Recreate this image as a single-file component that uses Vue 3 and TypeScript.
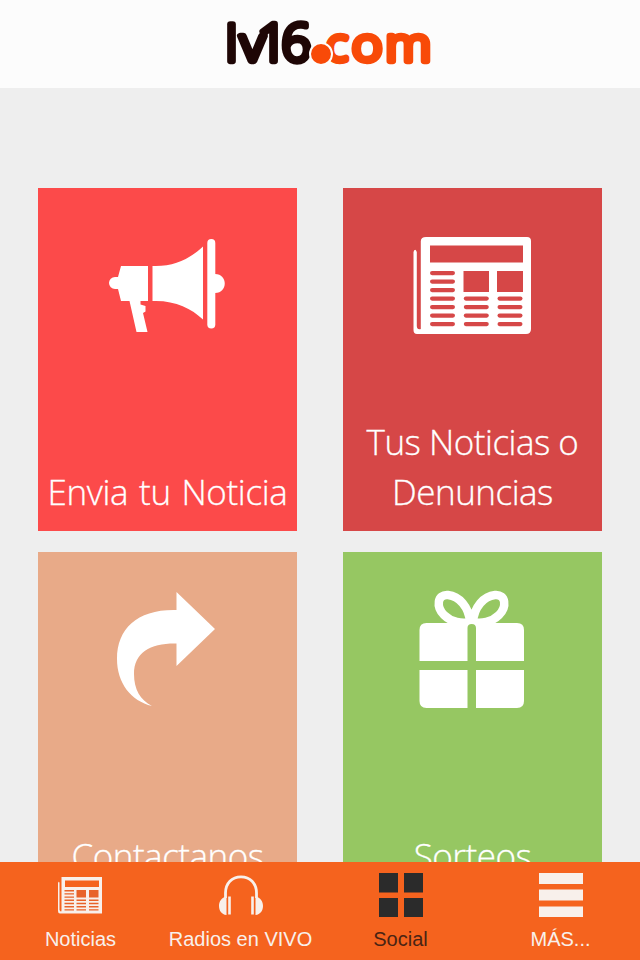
<script setup lang="ts">
interface Tile {
  icon: 'megaphone' | 'news' | 'share' | 'gift'
  lines: string[]
  tone: string
}

interface Tab {
  icon: 'news' | 'headphones' | 'grid' | 'menu'
  label: string
  active?: boolean
}

const tiles: Tile[] = [
  { icon: 'megaphone', lines: ['Envia tu Noticia'], tone: 'red' },
  { icon: 'news', lines: ['Tus Noticias o', 'Denuncias'], tone: 'brick' },
  { icon: 'share', lines: ['Contactanos'], tone: 'peach' },
  { icon: 'gift', lines: ['Sorteos'], tone: 'green' },
]

const tabs: Tab[] = [
  { icon: 'news', label: 'Noticias' },
  { icon: 'headphones', label: 'Radios en VIVO' },
  { icon: 'grid', label: 'Social', active: true },
  { icon: 'menu', label: 'MÁS...' },
]

const shortRows = [51.5, 60, 68.5, 77, 85.5, 94, 102.5]
</script>

<template>
  <div class="screen">
    <header class="header">
      <svg class="logo" viewBox="0 0 240 88" role="img" aria-label="lv16.com">
        <g class="wordmark dark">
          <text x="16" y="61" class="ascender">l</text>
          <text transform="translate(30.500 61) scale(1.130 1)">v</text>
          <text x="47.500" y="61" class="digit">1</text>
          <text x="71.500" y="61" class="digit">6</text>
        </g>
        <g class="wordmark orange">
          <text x="116" y="61">c</text>
          <text transform="translate(142 61) scale(1.120 1)">o</text>
          <text transform="translate(175.500 61) scale(1.120 1)">m</text>
        </g>
        <circle cx="111" cy="54" r="11" class="dot" />
      </svg>
    </header>

    <main class="tiles">
      <section v-for="tile in tiles" :key="tile.icon" class="tile" :class="tile.tone">
        <svg v-if="tile.icon === 'megaphone'" class="tile-icon" viewBox="0 0 160 140">
          <path d="M31 46H58V81H50.500V84.500L55.500 86V91.500L53 93L57.500 112H46.500L39.500 81H31L28 69H25A6 6 0 0 1 25 57H28Z" />
          <path d="M62.500 46C84 47 101 38 113 26.500V99.500C101 88 84 80 62.500 81Z" />
          <rect x="117.300" y="19" width="8" height="89.500" rx="4" />
          <path d="M125 54C138 54 138 73 125 73Z" />
        </svg>
        <svg v-else-if="tile.icon === 'news'" class="tile-icon" viewBox="0 0 160 140">
          <path d="M18.500 32Q20 27.500 21.800 32V106Q22 110 25.800 109V21Q26 17 31 17H132Q136 17 136 21V109Q136 114 131 114H22Q18.500 114 18.500 110Z" />
          <g class="cut">
            <rect x="35" y="25.500" width="93" height="17" />
            <rect x="68.500" y="51" width="25.500" height="21" />
            <rect x="102" y="51" width="26" height="21" />
            <rect v-for="y in shortRows" :key="y" x="35" :y="y - 0.500" width="25" height="4.200" rx="2.100" />
            <rect v-for="y in shortRows.slice(3)" :key="`b${y}`" x="68.800" :y="y - 0.500" width="25" height="4.200" rx="2.100" />
            <rect v-for="y in shortRows.slice(3)" :key="`c${y}`" x="102.500" :y="y - 0.500" width="25" height="4.200" rx="2.100" />
          </g>
        </svg>
        <svg v-else-if="tile.icon === 'share'" class="tile-icon" viewBox="0 0 160 140">
          <path d="M86.500 12L125 49L86.500 86V63.500C61 63 44 72 44 94C44 109 50 120 62 126C41 121 27 103 27 79C27 48 48 29 86.500 30Z" />
        </svg>
        <svg v-else class="tile-icon" viewBox="0 0 160 140">
          <path d="M24.500 81V50Q24.500 43 31.500 43H122Q129 43 129 50V81ZM24.500 90H129V121Q129 128 122 128H31.500Q24.500 128 24.500 121Z" />
          <path class="bow" d="M75 42C74 27 64 16 53 15C42 14 41 27 49 35C56 42 67 44 75 42ZM78 42C79 27 89 16 100 15C111 14 112 27 104 35C97 42 86 44 78 42Z" />
          <path class="ribbon" d="M72.500 129V48Q72.500 44 76.700 44T81 48V129Z" />
        </svg>
        <h2 class="caption">
          <span v-for="line in tile.lines" :key="line" class="line">{{ line }}</span>
        </h2>
      </section>
    </main>

    <nav class="tabbar">
      <a v-for="tab in tabs" :key="tab.icon" class="tab" :class="{ active: tab.active }">
        <svg v-if="tab.icon === 'news'" class="tab-icon news" viewBox="0 0 44 44">
          <path fill-rule="evenodd" d="M3.500 4H44V40.500H2Q0 40.500 0 38V10Q1 7.500 1.500 10V37Q3.500 40 3.500 37ZM7 7.500V14H41V7.500Z" />
          <g class="tab-cut">
            <rect x="18.500" y="17" width="9.500" height="7.500" />
            <rect x="31" y="17" width="9.500" height="7.500" />
            <path d="M6.500 17.700H16M6.500 20.900H16M6.500 24.100H16M6.500 27.300H16M6.500 30.500H16M6.500 33.700H16M6.500 36.900H16M18.500 27.300H28M18.500 30.500H28M18.500 33.700H28M18.500 36.900H28M31 27.300H40.500M31 30.500H40.500M31 33.700H40.500M31 36.900H40.500" />
          </g>
        </svg>
        <svg v-else-if="tab.icon === 'headphones'" class="tab-icon" viewBox="0 0 44 44">
          <path class="band" d="M6.500 25V20C6.500 10 13 3.800 22 3.800S37.500 10 37.500 20V25" />
          <path d="M7.500 23.500V42C-2.500 41 -2.500 25 7.500 23.500ZM36.500 23.500V42C46.500 41 46.500 25 36.500 23.500Z" />
          <path d="M9.200 23.500H11.800V41.500H9.200ZM32.200 23.500H34.800V41.500H32.200Z" />
        </svg>
        <svg v-else-if="tab.icon === 'grid'" class="tab-icon" viewBox="0 0 44 44">
          <path d="M0 0H19V19.500H0ZM25 0H44V19.500H25ZM0 25H19V44H0ZM25 25H44V44H25Z" />
        </svg>
        <svg v-else class="tab-icon" viewBox="0 0 44 44">
          <path d="M0 0H44V11H0ZM0 16.500H44V27.500H0ZM0 33.500H44V44H0Z" />
        </svg>
        <span class="tab-label">{{ tab.label }}</span>
      </a>
    </nav>
  </div>
</template>

<style>
body {
  margin: 0;
  overflow: hidden;
}
</style>

<style scoped>
.screen {
  display: flex;
  flex-direction: column;
  width: 640px;
  height: 960px;
  overflow: hidden;
  background: #eeeeee;
}

.header {
  flex: 0 0 88px;
  display: flex;
  justify-content: center;
  background: #fcfcfc;
}

.logo {
  width: 240px;
  height: 88px;
  margin-left: 20px;
}

.wordmark {
  font-family: 'Open Sans', sans-serif;
  font-weight: 300;
  font-size: 46px;
  stroke-width: 6.300px;
  stroke-linejoin: round;
  stroke-linecap: round;
}

.ascender {
  font-size: 48.700px;
}

.digit {
  font-size: 52px;
}

.dark {
  fill: #1e0605;
  stroke: #1e0605;
}

.orange {
  fill: #f84a08;
  stroke: #f84a08;
}

.dot {
  fill: #f84a08;
  stroke: #fdfdfd;
  stroke-width: 2px;
}

.tiles {
  flex: 1;
  min-height: 0;
  overflow: hidden;
  box-sizing: border-box;
  padding: 100px 38px 0;
  display: grid;
  grid-template-columns: 259px 259px;
  grid-auto-rows: 343px;
  gap: 21px 46px;
}

.tile {
  display: flex;
  flex-direction: column;
  justify-content: space-between;
  align-items: center;
  background: var(--tone);
}

.red { --tone: #fc4a4a; }
.brick { --tone: #d64747; }
.peach { --tone: #e8aa88; }
.green { --tone: #96c762; }

.tile-icon {
  width: 160px;
  height: 140px;
  margin-top: 32px;
  margin-right: -5px;
  fill: #ffffff;
}

.brick .tile-icon {
  margin-right: 0;
  margin-left: 4px;
}

.peach .tile-icon,
.green .tile-icon {
  margin-top: 28px;
}

.green .tile-icon {
  margin-left: 4px;
  margin-right: 0;
}

.cut,
.ribbon {
  fill: var(--tone);
}

.tile-icon .bow {
  fill: none;
  stroke: #ffffff;
  stroke-width: 8.500px;
}

.caption {
  margin: 0 0 14px;
  font-family: 'Open Sans', 'Noto Sans', sans-serif;
  font-weight: 300;
  font-size: 35px;
  line-height: 50px;
  letter-spacing: -0.500px;
  color: #ffffff;
  -webkit-text-stroke: 0.300px #ffffff;
  text-align: center;
  white-space: nowrap;
}

.red .caption {
  letter-spacing: -0.350px;
  word-spacing: 2px;
}

.line {
  display: block;
}

.tabbar {
  flex: 0 0 98px;
  display: grid;
  grid-template-columns: repeat(4, 160px);
  background: #f5631e;
}

.tab {
  display: flex;
  flex-direction: column;
  align-items: center;
  padding-top: 11px;
  color: #f8f0eb;
}

.tab-icon {
  width: 44px;
  height: 44px;
  margin-left: 2px;
  fill: currentColor;
}

.tab-icon.news {
  margin-left: 0;
}

.tab-cut {
  fill: #e8632a;
  stroke: #e8632a;
  stroke-width: 1.400px;
}

.tab-cut rect {
  stroke: none;
}

.band {
  fill: none;
  stroke: currentColor;
  stroke-width: 2.800px;
}

.tab-label {
  margin-top: 11px;
  padding-left: 1px;
  font-family: 'Liberation Sans', Arial, sans-serif;
  font-size: 20px;
  line-height: 23px;
  white-space: nowrap;
}

.active .tab-icon {
  color: #2b2b2b;
}

.active .tab-label {
  color: #4a2414;
}
</style>
